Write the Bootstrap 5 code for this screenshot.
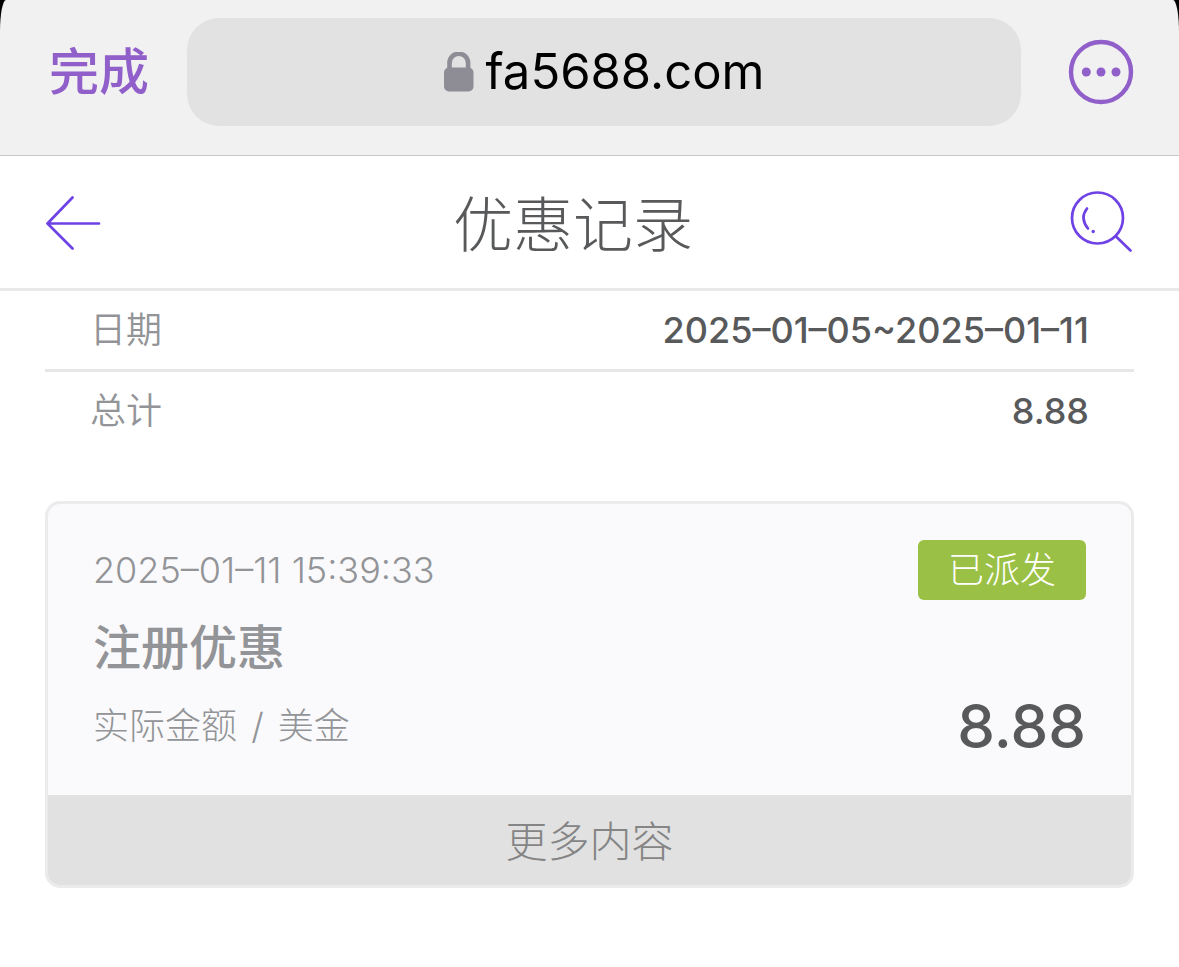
<!DOCTYPE html>
<html lang="zh-CN">
<head>
<meta charset="utf-8">
<meta name="viewport" content="width=device-width, initial-scale=1">
<title>优惠记录</title>
<link href="https://cdn.jsdelivr.net/npm/bootstrap@5.3.0/dist/css/bootstrap.min.css" rel="stylesheet">
<style>
  body { font-family: Inter, "Noto Sans CJK SC", sans-serif; font-size: 36px; line-height: 48px; color: #58595b; background: #fff; }
  .browser-wrap { background: #000; }
  .browser-bar { height: 156px; padding: 18px 45px 29px 49px; background: #f1f1f1; border-bottom: 1px solid #c8c8c8; border-radius: 6px 6px 0 0 / 32px 32px 0 0; }
  .plain-btn { padding: 0; border: 0; background: none; line-height: 0; }
  .done-btn { font-size: 50px; line-height: 64px; font-weight: 500; color: #905fc9; }
  .address { height: 108px; margin: 0 47px 0 38px; gap: 12px; border-radius: 32px; background: #e2e2e2; font-size: 49px; line-height: 64px; color: #000; }
  .page-bar { height: 135px; padding: 0 45px; border-bottom: 3px solid #e9e9e9; }
  .page-title { padding: 6px 24px 0 0; font-size: 60px; line-height: 72px; font-weight: 300; }
  .summary { margin: 0 45px; }
  .summary-row { height: 81px; padding: 0 45px; }
  .summary-row:first-child { height: 78px; }
  .summary-row + .summary-row { border-top: 3px solid #e7e7e7; }
  .summary-row dt { font-weight: 350; color: #929497; }
  .summary-row dd { font-weight: 500; }
  .record { margin: 51px 45px 0; border: 3px solid #ebebeb; border-radius: 15px; background: #fafafc; overflow: hidden; }
  .record-body { height: 291px; padding: 36px 45px 0 45px; color: #929497; }
  .status { width: 168px; height: 60px; border-radius: 6px; background: #9ac145; color: #fff; font-weight: 300; }
  .light-text { font-weight: 300; }
  .record-name { margin: 18px 0 12px; font-size: 48px; line-height: 60px; font-weight: 500; }
  .amount { font-size: 60px; line-height: 72px; font-weight: 500; color: #58595b; }
  .more-btn { height: 90px; padding: 8px 0 4px; border: 0; border-radius: 0; background: #e1e1e1; color: #858585; font-size: 42px; line-height: 54px; font-weight: 300; }
</style>
</head>
<body>
<div class="browser-wrap">
  <header class="browser-bar d-flex align-items-center">
    <button type="button" class="plain-btn done-btn">完成</button>
    <div class="address flex-grow-1 d-flex align-items-center justify-content-center">
      <svg width="30" height="40" viewBox="0 0 30 40" aria-hidden="true"><path d="M5.500 18V11a9.300 9.300 0 0 1 18.600 0V18" fill="none" stroke="#8e8d95" stroke-width="4.600"/><rect x="0" y="15.500" width="29.500" height="24" rx="5" fill="#8e8d95"/></svg>
      <span>fa5688.com</span>
    </div>
    <button type="button" class="plain-btn" aria-label="更多选项">
      <svg width="66" height="66" viewBox="0 0 66 66"><circle cx="33" cy="33" r="30" fill="none" stroke="#905fc9" stroke-width="4.400"/><g fill="#905fc9"><circle cx="18.300" cy="33" r="4.500"/><circle cx="33" cy="33" r="4.500"/><circle cx="48" cy="33" r="4.500"/></g></svg>
    </button>
  </header>
</div>
<nav class="page-bar d-flex align-items-center justify-content-between">
  <button type="button" class="plain-btn" aria-label="返回">
    <svg width="57" height="56" viewBox="0 0 57 56" fill="none" stroke="#6f42e5" stroke-width="2.700" stroke-linecap="round" stroke-linejoin="round"><path d="M27.500 3.500 2.500 29.500 27.500 54.500M2.500 29.500H54"/></svg>
  </button>
  <h1 class="page-title m-0">优惠记录</h1>
  <button type="button" class="plain-btn" aria-label="搜索">
    <svg width="66" height="66" viewBox="0 0 66 66" fill="none" stroke="#6f42e5" stroke-width="2.700" stroke-linecap="round"><circle cx="29.500" cy="29" r="25.500"/><path d="M48 47.500 62.500 61.500M19 19.500Q11.500 29 20 39.500"/><circle cx="25.200" cy="42.500" r="1.700" fill="#6f42e5" stroke="none"/></svg>
  </button>
</nav>
<main>
  <dl class="summary mb-0">
    <div class="summary-row d-flex align-items-center justify-content-between"><dt>日期</dt><dd class="m-0">2025–01–05~2025–01–11</dd></div>
    <div class="summary-row d-flex align-items-center justify-content-between"><dt>总计</dt><dd class="m-0">8.88</dd></div>
  </dl>
  <article class="record">
    <div class="record-body">
      <div class="d-flex align-items-center justify-content-between">
        <time class="light-text" datetime="2025-01-11T15:39:33">2025–01–11 15:39:33</time>
        <span class="status d-flex align-items-center justify-content-center">已派发</span>
      </div>
      <h2 class="record-name">注册优惠</h2>
      <div class="d-flex align-items-center justify-content-between">
        <span class="light-text">实际金额 <span class="mx-1">/</span> 美金</span>
        <strong class="amount">8.88</strong>
      </div>
    </div>
    <button type="button" class="more-btn btn w-100">更多内容</button>
  </article>
</main>
<script src="https://cdn.jsdelivr.net/npm/bootstrap@5.3.0/dist/js/bootstrap.bundle.min.js"></script>
</body>
</html>
